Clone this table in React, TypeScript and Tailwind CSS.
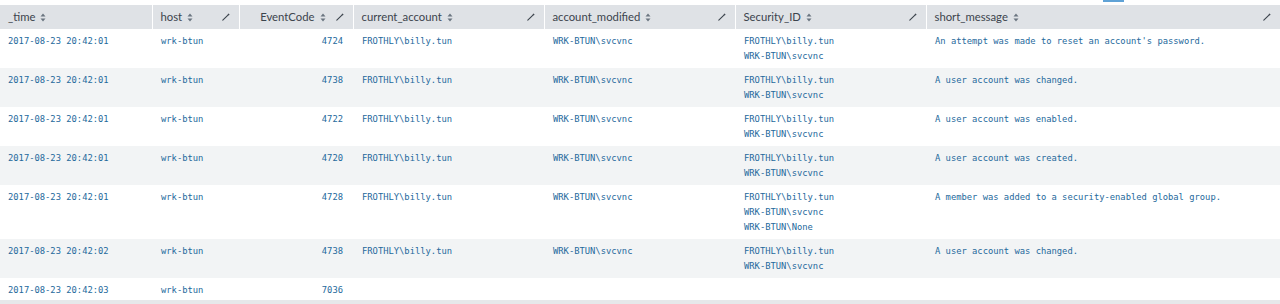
import React from "react";

type Row = {
  time: string;
  host: string;
  code: string;
  cur: string;
  mod: string;
  sec: string[];
  msg: string;
};

const rows: Row[] = [
  { time: "2017-08-23 20:42:01", host: "wrk-btun", code: "4724", cur: "FROTHLY\\billy.tun", mod: "WRK-BTUN\\svcvnc", sec: ["FROTHLY\\billy.tun", "WRK-BTUN\\svcvnc"], msg: "An attempt was made to reset an account's password." },
  { time: "2017-08-23 20:42:01", host: "wrk-btun", code: "4738", cur: "FROTHLY\\billy.tun", mod: "WRK-BTUN\\svcvnc", sec: ["FROTHLY\\billy.tun", "WRK-BTUN\\svcvnc"], msg: "A user account was changed." },
  { time: "2017-08-23 20:42:01", host: "wrk-btun", code: "4722", cur: "FROTHLY\\billy.tun", mod: "WRK-BTUN\\svcvnc", sec: ["FROTHLY\\billy.tun", "WRK-BTUN\\svcvnc"], msg: "A user account was enabled." },
  { time: "2017-08-23 20:42:01", host: "wrk-btun", code: "4720", cur: "FROTHLY\\billy.tun", mod: "WRK-BTUN\\svcvnc", sec: ["FROTHLY\\billy.tun", "WRK-BTUN\\svcvnc"], msg: "A user account was created." },
  { time: "2017-08-23 20:42:01", host: "wrk-btun", code: "4728", cur: "FROTHLY\\billy.tun", mod: "WRK-BTUN\\svcvnc", sec: ["FROTHLY\\billy.tun", "WRK-BTUN\\svcvnc", "WRK-BTUN\\None"], msg: "A member was added to a security-enabled global group." },
  { time: "2017-08-23 20:42:02", host: "wrk-btun", code: "4738", cur: "FROTHLY\\billy.tun", mod: "WRK-BTUN\\svcvnc", sec: ["FROTHLY\\billy.tun", "WRK-BTUN\\svcvnc"], msg: "A user account was changed." },
  { time: "2017-08-23 20:42:03", host: "wrk-btun", code: "7036", cur: "", mod: "", sec: [], msg: "" },
];

function Sort() {
  return (
    <svg width="6" height="9" viewBox="0 0 6 9" className="ml-[5px] inline-block" fill="#6b7580">
      <path d="M3 0.5 L5.5 3.5 H0.5 Z" />
      <path d="M3 8.5 L5.5 5.5 H0.5 Z" />
    </svg>
  );
}

function Pencil() {
  return (
    <svg width="8" height="8" viewBox="0 0 8 8" className="shrink-0">
      <path d="M0.8 7.2 L6.2 1.8" stroke="#3c444d" strokeWidth="1.1" strokeLinecap="round" />
      <path d="M5.6 1.2 L6.8 2.4 L7.6 1.6 L6.4 0.4 Z" fill="#3c444d" />
    </svg>
  );
}

const mono = "font-['DejaVu_Sans_Mono',monospace] text-[8.8px] leading-[15px] text-[#25699c]";

export default function App() {
  const widths = [152, 87, 114, 191, 191, 191, 354];
  const headers: { label: string; right?: boolean; pencil: boolean }[] = [
    { label: "_time", pencil: false },
    { label: "host", pencil: true },
    { label: "EventCode", right: true, pencil: true },
    { label: "current_account", pencil: true },
    { label: "account_modified", pencil: true },
    { label: "Security_ID", pencil: true },
    { label: "short_message", pencil: true },
  ];
  return (
    <div className="w-[1280px] h-[304px] bg-white overflow-hidden flex flex-col">
      <div className="h-[5px] flex justify-end pr-[156px] shrink-0">
        <div className="w-[21px] h-[2px] bg-[#5fa2d6]" />
      </div>
      <div className="h-[299px] overflow-hidden border-b-4 border-[#e6e8ea] shrink-0">
        <table className="table-fixed border-collapse w-[1280px]">
          <colgroup>
            {widths.map((w, i) => (
              <col key={i} style={{ width: w }} />
            ))}
          </colgroup>
          <thead>
            <tr className="bg-[#dfe2e6] h-[24px]">
              {headers.map((h, i) => (
                <th
                  key={h.label}
                  className={`p-0 font-normal text-left align-middle ${i > 0 ? "border-l border-white" : ""}`}
                >
                  <div className={`flex items-center h-[24px] pl-[8px] pr-[9px] font-['Lato',sans-serif] text-[11.3px] text-[#3c444d] ${h.right ? "justify-end" : "justify-between"}`}>
                    <span className="flex items-center">
                      {h.label}
                      <Sort />
                    </span>
                    {h.pencil && (
                      <span className={h.right ? "ml-[10px] flex" : "flex"}>
                        <Pencil />
                      </span>
                    )}
                  </div>
                </th>
              ))}
            </tr>
          </thead>
          <tbody>
            {rows.map((r, i) => (
              <tr key={i} className={i % 2 === 1 ? "bg-[#f2f4f5]" : "bg-white"}>
                <td className={`align-top pt-[5px] pb-[4px] pl-[8px] ${mono}`}>
                  <div className="h-[30px]">{r.time}</div>
                </td>
                <td className={`align-top pt-[5px] pb-[4px] pl-[9px] ${mono}`}>{r.host}</td>
                <td className={`align-top pt-[5px] pb-[4px] pr-[10px] text-right ${mono}`}>{r.code}</td>
                <td className={`align-top pt-[5px] pb-[4px] pl-[9px] ${mono}`}>{r.cur}</td>
                <td className={`align-top pt-[5px] pb-[4px] pl-[9px] ${mono}`}>{r.mod}</td>
                <td className={`align-top pt-[5px] pb-[4px] pl-[9px] ${mono}`}>
                  {r.sec.map((s, j) => (
                    <div key={j}>{s}</div>
                  ))}
                </td>
                <td className={`align-top pt-[5px] pb-[4px] pl-[9px] ${mono}`}>{r.msg}</td>
              </tr>
            ))}
          </tbody>
        </table>
      </div>
    </div>
  );
}
